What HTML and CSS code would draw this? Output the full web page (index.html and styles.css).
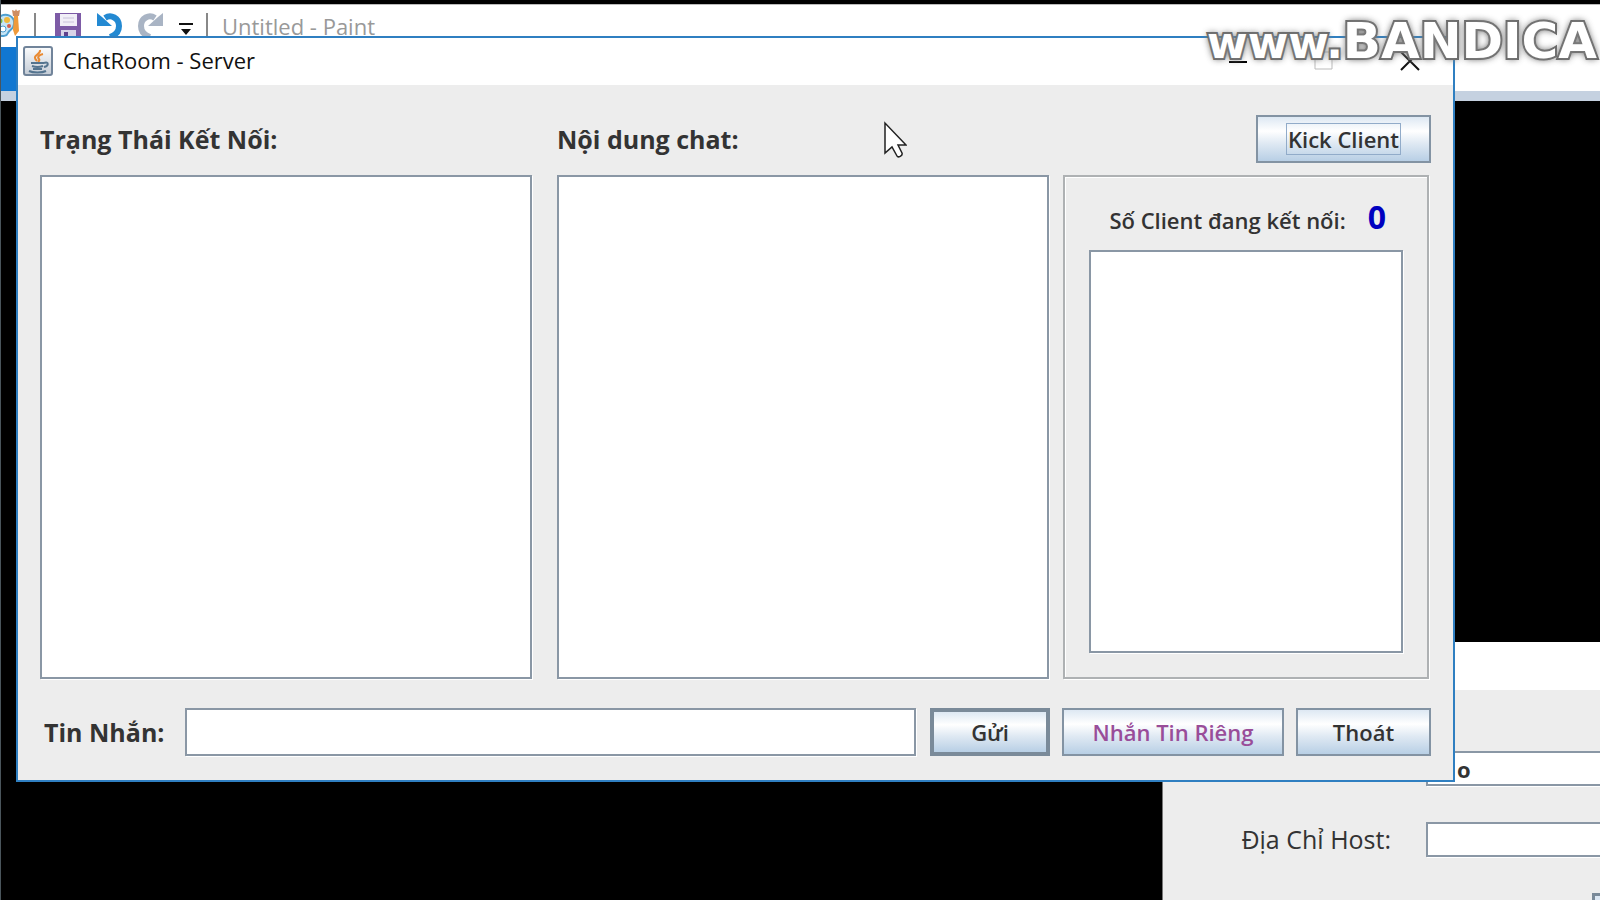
FILE: index.html
```html
<!DOCTYPE html>
<html lang="vi">
<head>
<meta charset="utf-8">
<title>ChatRoom - Server</title>
<link rel="stylesheet" href="styles.css">
</head>
<body>
<div class="desktop">
  <header class="paint">
    <div class="paint-bar">
      <svg class="palette" viewBox="0 0 22 30" width="22" height="30" aria-hidden="true">
        <path d="M0 8C7 3 16 7 15 15c0 5-5 6-6 9s-6 4-9 2z" fill="#c5e4f5" stroke="#4e9fd0" stroke-width="2"/>
        <circle cx="1" cy="12" r="2.500" fill="#79b843"/><circle cx="8" cy="11" r="3" fill="#f0b73a"/><circle cx="10" cy="17" r="2" fill="#d75d48"/><circle cx="4" cy="20" r="3" fill="#fff" stroke="#4e9fd0"/>
        <path d="M13 1l3 1 1-2 1 2 3-1-1 6h-6z" fill="#cf8e62"/><path d="M15 7h4l1 15-4 5-2-6z" fill="#ee9a3b"/>
      </svg>
      <i class="rule"></i>
      <svg class="save" viewBox="0 0 26 26" width="26" height="26" aria-hidden="true">
        <path d="M0 0h26v26H0z" fill="#7d5ba6"/><path d="M5 1h17v12H5z" fill="#f1eff7"/><path d="M8 5h11M8 9h11" stroke="#c9c2db"/><path d="M6 17h15v9H6z" fill="#d9d3e8"/><path d="M9 19h4v7H9z" fill="#60428d"/>
      </svg>
      <svg class="undo" viewBox="0 0 26 26" width="26" height="26" aria-hidden="true">
        <path d="M8 5C14 1 22 5 22 13c0 5-3 9-9 11" fill="none" stroke="#2389d2" stroke-width="6"/><path d="M0 0l5 4 10 9H0z" fill="#2389d2"/>
      </svg>
      <svg class="redo" viewBox="0 0 26 26" width="26" height="26" aria-hidden="true">
        <path d="M18 5C12 1 4 5 4 13c0 5 3 9 9 11" fill="none" stroke="#a9b4c4" stroke-width="6"/><path d="M26 0l-5 4-10 9h15z" fill="#a9b4c4"/>
      </svg>
      <svg class="more" viewBox="0 0 14 12" width="14" height="12" aria-hidden="true"><path d="M0 0h14v2H0zM2 6h10l-5 6z" fill="#111"/></svg>
      <i class="rule"></i>
      <span class="paint-title">Untitled - Paint</span>
    </div>
    <div class="paint-ribbon"><div class="file-tab"></div></div>
    <div class="paint-edge"></div>
  </header>

  <section class="client" aria-label="Client">
    <div class="client-title"></div>
    <form class="client-form">
      <label for="name"></label><input id="name" class="field" value="o">
      <label for="host">Địa Chỉ Host:</label><input id="host" class="field">
    </form>
    <button class="client-button" type="button" aria-label="Kết nối"></button>
  </section>

  <main class="server">
    <div class="title-bar">
      <svg class="java" viewBox="0 0 30 30" width="30" height="30" aria-hidden="true">
        <defs><linearGradient id="tile" x1="0" y1="0" x2="0" y2="1"><stop offset="0" stop-color="#fbfcfd"/><stop offset="1" stop-color="#c3cbd5"/></linearGradient></defs>
        <rect x="1" y="1" width="28" height="28" rx="2" fill="url(#tile)" stroke="#71849a" stroke-width="2"/>
        <path d="M17 4c1 4-6 5-5 8 0 1 1 2 2 3M20 8c-4 1-6 3-4 5 1 1 0 2-1 3" fill="none" stroke="#e98a32" stroke-width="2"/>
        <path d="M8 17h13M9 20c3 1 8 1 11 0M10 23h9M6 25c4 2 13 2 17 0M21 17c5-2 5 3 0 4" fill="none" stroke="#54748f" stroke-width="2"/>
      </svg>
      <h1>ChatRoom - Server</h1>
      <div class="controls">
        <button type="button" aria-label="Minimize"><svg viewBox="0 0 20 20" width="20" height="20"><path d="M1 11h18" stroke="#000" stroke-width="2"/></svg></button>
        <button type="button" aria-label="Maximize"><svg viewBox="0 0 20 20" width="20" height="20"><path d="M1 1h17v17H1z" fill="none" stroke="#bbb"/></svg></button>
        <button type="button" aria-label="Close"><svg viewBox="0 0 20 20" width="20" height="20"><path d="M1 1l18 18M19 1L1 19" stroke="#111" stroke-width="2"/></svg></button>
      </div>
    </div>
    <div class="content">
      <div class="columns">
        <label class="heading" for="status">Trạng Thái Kết Nối:</label>
        <label class="heading chat-col" for="chat">Nội dung chat:</label>
        <button class="metal kick" type="button"><span>Kick Client</span></button>
        <textarea id="status" class="field" readonly></textarea>
        <textarea id="chat" class="field chat-col" readonly></textarea>
        <div class="group">
          <div class="count"><label for="clients">Số Client đang kết nối:</label><output>0</output></div>
          <select id="clients" class="field" size="10"></select>
        </div>
      </div>
      <form class="composer">
        <label class="heading" for="message">Tin Nhắn:</label>
        <input id="message" class="field">
        <button class="metal send" type="button">Gửi</button>
        <button class="metal private" type="button">Nhắn Tin Riêng</button>
        <button class="metal exit" type="button">Thoát</button>
      </form>
    </div>
  </main>

  <svg class="pointer" viewBox="0 0 24 38" width="24" height="38" aria-hidden="true"><path d="M2 2v30l7-6 5 9c1 2 6 0 5-3l-4-8h8z" fill="#fff" stroke="#222" stroke-width="1.500"/></svg>
  <div class="watermark"><span>www.</span>BANDICA</div>
</div>
</body>
</html>
```
FILE: styles.css
```css
* { box-sizing: border-box; }
body { margin: 0; background: #000; color: #333; font-family: "Open Sans", "Noto Sans", sans-serif; }
button, input, textarea, select { font: inherit; color: inherit; margin: 0; border-radius: 0; }
.desktop { position: relative; height: 100vh; overflow: hidden; border-left: 1px solid #4a555c; }

/* Paint window behind */
.paint { padding-top: 4px; }
.paint-bar { display: flex; align-items: flex-start; height: 43px; padding-top: 8px; background: #fff; border-top: 1px solid #bbb; }
.palette { margin-top: -4px; margin-left: -2px; }
.rule { width: 2px; height: 24px; margin-left: 13px; background: #888; }
.save { margin-left: 19px; }
.undo { margin-left: 16px; }
.redo { margin-left: 14px; }
.more { margin: 10px 0 0 16px; }
.paint-title { margin-left: 14px; font-size: 22px; line-height: 26px; color: #999; }
.paint-ribbon { height: 44px; background: #fff; }
.file-tab { width: 100px; height: 100%; background: #1177d1; }
.paint-edge { height: 10px; background: #c5d1e0; }

.field { border: 2px solid #8a97a5; background: #fff; outline: 0; box-shadow: 1px 1px 0 #fff; padding: 0 4px; }

/* Client window behind */
.client { position: absolute; left: 1161px; right: -120px; top: 642px; bottom: 0; background: #ededed; border-left: 1px solid #777; overflow: hidden; }
.client-title { height: 48px; background: #fff; }
.client-form { display: grid; grid-template-columns: 228px 1fr; column-gap: 35px; row-gap: 36px; padding-top: 61px; align-items: center; }
.client-form label { text-align: right; font-size: 25px; line-height: 35px; }
.client-form .field { height: 35px; }
#name { padding-left: 29px; font-size: 22px; font-weight: 700; }
.client-button { position: absolute; left: 429px; top: 251px; width: 120px; height: 48px; border: 3px solid #7a8a99; background: #dce7f3; }

/* Server window */
.server { position: absolute; left: 15px; right: 145px; top: 36px; bottom: 118px; display: flex; flex-direction: column; border: 2px solid #2f7fc1; background: #ededed; }
.title-bar { display: flex; align-items: center; height: 47px; padding: 0 33px 2px 5px; background: #fff; }
h1 { flex: 1; margin: 0 0 0 10px; padding-bottom: 2px; font-size: 22px; line-height: 28px; font-weight: 400; color: #111; }
.controls { display: flex; gap: 66px; }
.controls button { display: flex; padding: 0; border: 0; background: none; }

.content { flex: 1; display: flex; flex-direction: column; gap: 29px; padding: 30px 22px 24px; }
.columns { flex: 1; display: grid; grid-template-columns: minmax(0, 1fr) 25px minmax(0, 1fr) 14px 368px; grid-template-rows: 48px 1fr; row-gap: 12px; }
.columns textarea { resize: none; }
.chat-col { grid-column: 3; }
.heading { font-size: 25px; line-height: 48px; font-weight: 700; }
.metal { display: flex; align-items: center; justify-content: center; height: 48px; padding: 0; border: 2px solid #8393a3; background: linear-gradient(#dde8f3, #fff 32%, #dfe9f3 60%, #b8cfe5); font-size: 22px; font-weight: 600; }
.kick { grid-column: 5; justify-self: end; width: 175px; }
.kick span { padding: 0 1px; line-height: 30px; border: 1px solid #91abc9; }
.group { grid-column: 5; display: flex; flex-direction: column; margin-right: 2px; padding: 22px 24px 24px; border: 2px solid #aeb1b3; box-shadow: 1px 1px 0 #fff, inset 1px 1px 0 #fff; }
.count { display: flex; align-items: baseline; justify-content: flex-end; gap: 22px; height: 40px; margin-bottom: 11px; padding-right: 17px; font-size: 22px; line-height: 40px; font-weight: 600; }
.count output { font-size: 32px; font-weight: 700; line-height: 36px; color: #0000c0; }
.group select { flex: 1; width: 100%; overflow: hidden; }
.composer { display: flex; }
.composer .heading { width: 145px; padding-left: 4px; }
.composer .field { flex: 1; min-width: 0; height: 48px; }
.send { width: 120px; margin-left: 14px; border: 4px solid #7a8a99; }
.private { width: 222px; margin-left: 12px; color: #994d99; }
.exit { width: 135px; margin-left: 12px; }

.pointer { position: absolute; left: 882px; top: 121px; }
.watermark { position: absolute; left: 1206px; top: 13px; font: 700 50px/56px "DejaVu Sans", sans-serif; color: #fff; white-space: nowrap; -webkit-text-stroke: 4px #666; paint-order: stroke fill; text-shadow: 0 0 6px #777, 0 0 8px #888; }
.watermark span { font-size: 44px; }
```
